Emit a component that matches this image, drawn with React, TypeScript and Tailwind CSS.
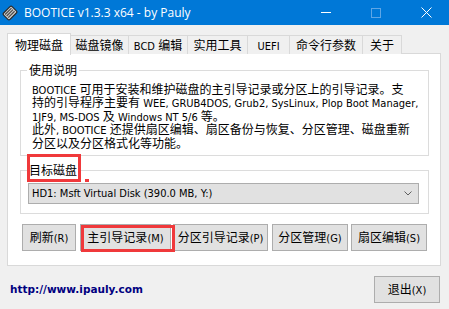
import React from 'react'

const latin = "font-[family-name:'DejaVu_Sans_Condensed','Liberation_Sans',sans-serif] text-[11px]"

// CJK text at 12px, ASCII runs in a Tahoma-ish narrower face
const Mixed = ({ text }: { text: string }) => (
	<span>
		{text.split(/([\x20-\x7E]+)/).map((part, i) =>
			/[\x21-\x7E]/.test(part) ? (
				<span key={i} className={latin}>
					{part}
				</span>
			) : (
				<React.Fragment key={i}>{part}</React.Fragment>
			)
		)}
	</span>
)

const tabs = [
	{ label: '物理磁盘', w: 'w-[64px]', active: true },
	{ label: '磁盘镜像', w: 'w-[59px]' },
	{ label: 'BCD 编辑', w: 'w-[60px]' },
	{ label: '实用工具', w: 'w-[61px]' },
	{ label: 'UEFI', w: 'w-[43px]' },
	{ label: '命令行参数', w: 'w-[74px]' },
	{ label: '关于', w: 'w-[40px]' },
]

const lines = [
	'BOOTICE 可用于安装和维护磁盘的主引导记录或分区上的引导记录。支',
	'持的引导程序主要有 WEE, GRUB4DOS, Grub2, SysLinux, Plop Boot Manager,',
	'1JF9, MS-DOS 及 Windows NT 5/6 等。',
	'此外, BOOTICE 还提供扇区编辑、扇区备份与恢复、分区管理、磁盘重新',
	'分区以及分区格式化等功能。',
]

const Btn = ({ label, className = '' }: { label: string; className?: string }) => (
	<div
		className={`h-[27px] bg-[#e1e1e1] border border-[#adadad] flex items-center justify-center leading-none text-black ${className}`}
	>
		<Mixed text={label} />
	</div>
)

const DiskIcon = () => (
	<svg width="16" height="16" viewBox="0 0 16 16">
		<g transform="rotate(-45 8 8)">
			<rect x="2" y="3.5" width="12" height="9" rx="1.5" fill="#cfcfcf" stroke="#2b2b2b" strokeWidth="1.2" />
			<rect x="3.5" y="5" width="9" height="1.2" fill="#4a4a4a" />
			<rect x="3.5" y="7.2" width="9" height="1.2" fill="#4a4a4a" />
			<rect x="3.5" y="9.4" width="9" height="1.2" fill="#4a4a4a" />
		</g>
	</svg>
)

export default function App() {
	return (
		<div className="w-[449px] h-[309px] bg-[#f0f0f0] overflow-hidden font-[family-name:'Noto_Sans_CJK_SC',sans-serif] text-[12px] text-black">
			{/* title bar */}
			<div className="h-[25px] bg-[#0078d7] flex items-center text-white">
				<div className="ml-[2px] mt-[1px]">
					<DiskIcon />
				</div>
				<span className="ml-[6px] font-[family-name:'Open_Sans',sans-serif] text-[12px]">
					BOOTICE v1.3.3 x64 - by Pauly
				</span>
				<div className="ml-auto flex items-center h-full">
					<div className="w-[46px] flex justify-center">
						<div className="w-[10px] h-px bg-white" />
					</div>
					<div className="w-[46px] ml-[4px] flex justify-center">
						<div className="w-[10px] h-[10px] border border-[#5ea6e6]" />
					</div>
					<div className="w-[46px] ml-[4px] flex justify-center">
						<svg width="11" height="11" viewBox="0 0 11 11">
							<path d="M0.5 0.5 L10.5 10.5 M10.5 0.5 L0.5 10.5" stroke="#fff" strokeWidth="1" />
						</svg>
					</div>
				</div>
			</div>

			{/* tabs */}
			<div className="mt-[8px] ml-[7px] flex items-end h-[21px]">
				{tabs.map((t, i) => (
					<div
						key={t.label}
						className={`${t.w} ${i > 0 ? '-ml-px' : ''} ${
							t.active
								? 'bg-white border-x border-t border-[#d9d9d9] relative z-10 -mb-px h-[22px]'
								: 'h-[19px] bg-[#f0f0f0] border-x border-t border-[#d9d9d9]'
						} flex items-center justify-center leading-none`}
					>
						<Mixed text={t.label} />
					</div>
				))}
			</div>

			{/* tab panel */}
			<div className="ml-[7px] -mt-px w-[434px] h-[213px] bg-white border border-[#d9d9d9] pt-px px-[12px]">
				{/* group: 使用说明 */}
				<div className="mt-[15px] w-[409px] border border-[#dcdcdc] pb-[6px]">
					<div className="-mt-[8px] ml-[6px] px-[2px] w-fit bg-white leading-[14px]">使用说明</div>
					<div className="pt-[5px] pl-[11px]">
						{lines.map(l => (
							<div key={l} className="leading-[13.4px] h-[13.4px] whitespace-nowrap">
								<Mixed text={l} />
							</div>
						))}
					</div>
				</div>

				{/* group: 目标磁盘 */}
				<div className="mt-[14px] w-[409px] border border-[#dcdcdc] pb-[9px]">
					<div className="-mt-[8px] ml-[6px] px-[2px] w-fit bg-white leading-[14px] relative">
						目标磁盘
						<span className="absolute left-0 top-[-9px] w-[54px] h-[28px] border-[3px] border-[#f0393b]" />
						<span className="absolute left-[58px] top-[16px] w-[4px] h-[3px] bg-[#f0393b]" />
					</div>
					<div className="mt-[6px] ml-[7px] w-[391px] h-[21px] bg-[#e1e1e1] border border-[#adadad] flex items-center pl-[3px] pr-[6px] leading-none">
						<span className={latin}>HD1: Msft Virtual Disk (390.0 MB, Y:)</span>
						<svg className="ml-auto" width="8" height="5" viewBox="0 0 8 5">
							<path d="M0.5 0.5 L4 4 L7.5 0.5" fill="none" stroke="#606060" strokeWidth="1" />
						</svg>
					</div>
				</div>

				<div className="mt-[10px] ml-[2px] flex">
					<Btn label="刷新(R)" className="w-[54px]" />
					<div className="relative ml-[4px]">
						<Btn label="主引导记录(M)" className="w-[91px]" />
						<span className="absolute left-[1px] top-[1px] w-[94px] h-[27px] border-[3px] border-[#f0393b]" />
					</div>
					<Btn label="分区引导记录(P)" className="w-[95px] ml-[2px]" />
					<Btn label="分区管理(G)" className="w-[76px] ml-[4px]" />
					<Btn label="扇区编辑(S)" className="w-[76px] ml-[3px]" />
				</div>
			</div>

			{/* footer */}
			<div className="mt-[10px] flex items-center pl-[10px] pr-[9px]">
				<span className="font-[family-name:'DejaVu_Sans',sans-serif] font-bold text-[10.5px] text-[#000080]">
					http://www.ipauly.com
				</span>
				<Btn label="退出(X)" className="ml-auto w-[66px] h-[26px]" />
			</div>
		</div>
	)
}
